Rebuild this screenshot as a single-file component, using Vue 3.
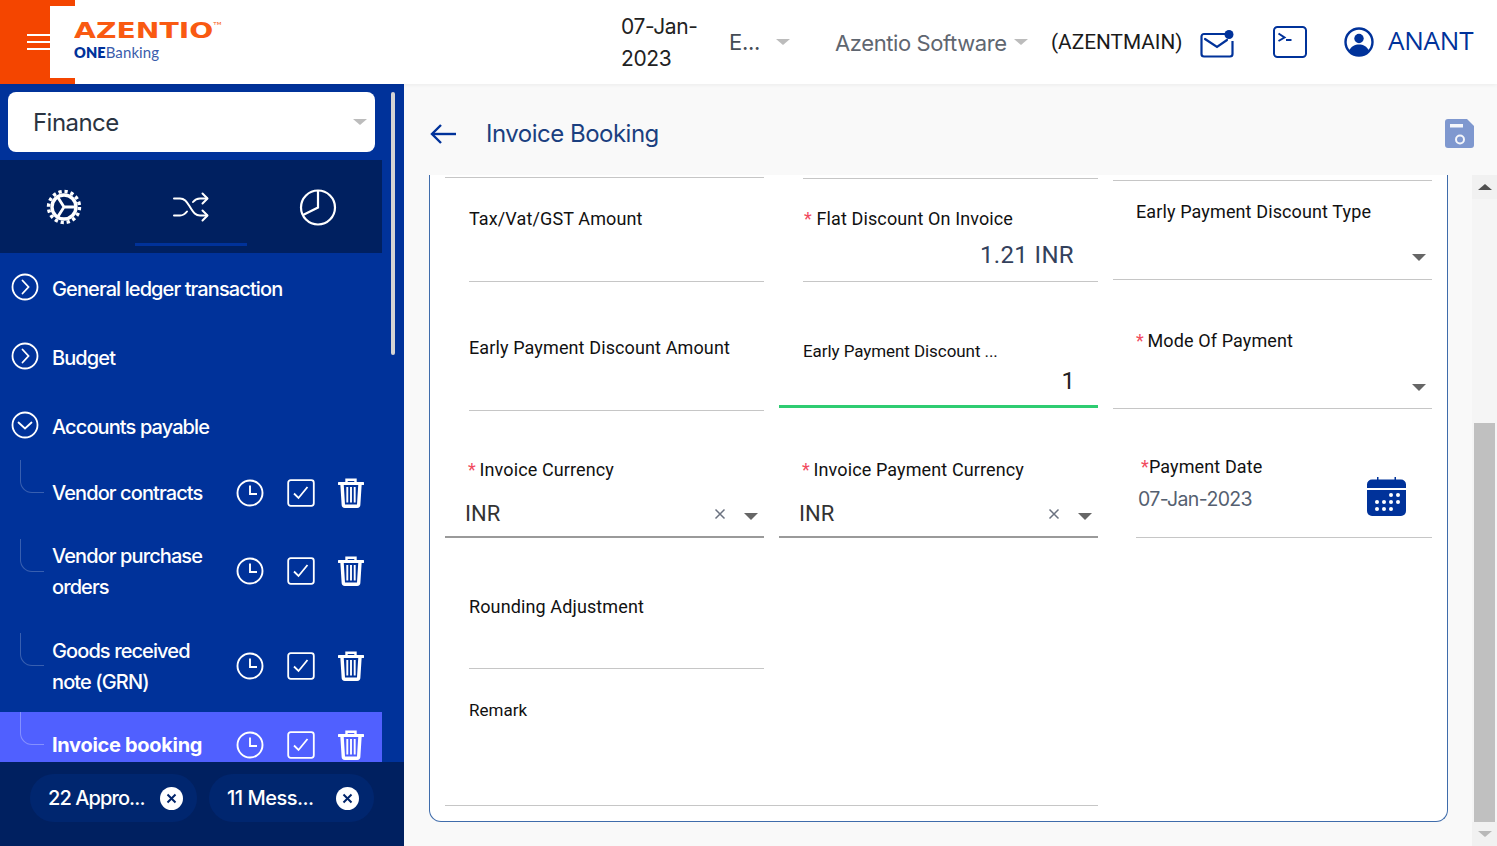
<script setup>
const topMenus = [
  { label: "General ledger transaction", open: false },
  { label: "Budget", open: false },
  { label: "Accounts payable", open: true },
];

const subMenus = [
  { label: "Vendor contracts", kind: "short" },
  { label: "Vendor purchase orders", kind: "tall" },
  { label: "Goods received note (GRN)", kind: "short" },
  { label: "Invoice booking", kind: "short", active: true },
];

const chips = [
  { label: "22 Appro...", kind: "first" },
  { label: "11 Mess...", kind: "second" },
];
</script>

<template>
  <div class="app-shell">
    <header class="topbar">
      <div class="brand">
        <div class="burger"><span></span><span></span><span></span></div>
        <div class="logo-box">
          <div class="logo-main">AZENTIO<sup>TM</sup></div>
          <div class="logo-sub"><b>ONE</b>Banking</div>
        </div>
      </div>
      <div class="top-items">
        <div class="top-date">07-Jan-<br />2023</div>
        <div class="top-lang">E...</div>
        <i class="caret-light lang-caret"></i>
        <div class="top-company">Azentio Software</div>
        <i class="caret-light company-caret"></i>
        <div class="top-code">(AZENTMAIN)</div>
        <svg class="mail-icon" width="34" height="28" viewBox="0 0 34 28" fill="none" stroke="#00329a" stroke-width="2.2">
          <path d="M25 4H4a2.500 2.500 0 0 0-2.500 2.500V24A2.500 2.500 0 0 0 4 26.500h26a2.500 2.500 0 0 0 2.500-2.500V11" />
          <path d="M5 9l12 8 10-7" stroke-linecap="round" />
          <circle cx="29" cy="4.500" r="4.500" fill="#00329a" stroke="none" />
        </svg>
        <svg class="term-icon" width="34" height="32" viewBox="0 0 34 32" fill="none" stroke="#00329a" stroke-width="2">
          <rect x="1" y="1" width="32" height="30" rx="3.500" />
          <path d="M5.500 7.500l6 4-6 3.500" />
          <path d="M13 14h5.500" />
        </svg>
        <svg class="user-icon" width="30" height="30" viewBox="0 0 30 30">
          <circle cx="15" cy="15" r="13.500" fill="none" stroke="#00329a" stroke-width="2.400" />
          <circle cx="15" cy="11.500" r="4.700" fill="#00329a" />
          <path d="M5 24c2-5 6-6.500 10-6.500S23 19 25 24c-2.500 3-6 4.500-10 4.500S7.500 27 5 24z" fill="#00329a" />
        </svg>
        <div class="top-user">ANANT</div>
      </div>
    </header>

    <div class="workspace">
      <aside class="sidebar">
        <div class="side-scroll">
          <div class="module-select">
            <span>Finance</span>
            <i class="caret-light"></i>
          </div>

          <div class="side-tabs">
            <svg class="tab-gear" width="36" height="36" viewBox="0 0 36 36" fill="none" stroke="#fff">
              <circle cx="18" cy="18" r="15.500" stroke-width="3.400" stroke-dasharray="3.250 2.840" />
              <circle cx="18" cy="18" r="12" stroke-width="3.400" />
              <path d="M18 18h11M18 18l-6-9.500M18 18l-6 9.500" stroke-width="2.800" />
            </svg>
            <div class="tab-active">
              <svg width="36" height="30" viewBox="0 0 36 30" fill="none" stroke="#fff" stroke-width="2" stroke-linecap="round" stroke-linejoin="round">
                <path d="M1 6.500h6c5 0 7 4 10 8.500s5 8.500 10 8.500h7" />
                <path d="M1 23.500h6c3 0 5-1.500 7-4M20 10c2-2.500 4-3.500 7-3.500h7" />
                <path d="M29.500 1.500l5 5-5 5M29.500 18.500l5 5-5 5" />
              </svg>
            </div>
            <svg class="tab-pie" width="38" height="38" viewBox="0 0 38 38" fill="none" stroke="#fff" stroke-width="2.200">
              <circle cx="19" cy="19.500" r="17" />
              <path d="M19 2.500v17L4 27" />
            </svg>
          </div>

          <nav class="side-menu">
            <div v-for="item in topMenus" :key="item.label" class="menu-row">
              <svg width="28" height="28" viewBox="0 0 28 28" fill="none" stroke="#fff" stroke-width="1.800">
                <circle cx="14" cy="14" r="12.500" />
                <path v-if="item.open" d="M7.500 11.500l6.500 6 6.500-6" stroke-linecap="round" />
                <path v-else d="M11.500 7.500l6 6.500-6 6.500" stroke-linecap="round" />
              </svg>
              <span>{{ item.label }}</span>
            </div>

            <div
              v-for="sub in subMenus"
              :key="sub.label"
              class="sub-row"
              :class="[sub.kind, { active: sub.active }]"
            >
              <i class="connector"></i>
              <div class="sub-inner">
                <span class="sub-label">{{ sub.label }}</span>
                <div class="sub-actions">
                  <svg width="28" height="28" viewBox="0 0 28 28" fill="none" stroke="#fff" stroke-width="1.900">
                    <circle cx="14" cy="14" r="12.500" />
                    <path d="M14 6.500V15h7" />
                  </svg>
                  <svg width="28" height="28" viewBox="0 0 28 28" fill="none" stroke="#fff" stroke-width="1.800">
                    <rect x="1.200" y="1.200" width="25.600" height="25.600" rx="2.500" />
                    <path d="M7 14.500l4.500 4.500L20.500 8" />
                  </svg>
                  <svg width="26" height="30" viewBox="0 0 26 30" fill="none" stroke="#fff" stroke-width="2.400">
                    <path d="M1 5.500h24" stroke-width="3" stroke-linecap="round" />
                    <path d="M8.500 5V1.800h9V5" />
                    <path d="M4 6l1.300 20.500A1.800 1.800 0 0 0 7 28.300h12a1.800 1.800 0 0 0 1.700-1.800L22 6" stroke-width="3.400" />
                    <path d="M9.300 9v15.500M13 9v15.500M16.700 9v15.500" stroke-width="1.900" />
                  </svg>
                </div>
              </div>
            </div>
          </nav>

          <div class="side-thumb"></div>
        </div>

        <footer class="side-footer">
          <div v-for="chip in chips" :key="chip.label" class="chip" :class="chip.kind">
            <span>{{ chip.label }}</span>
            <svg width="23" height="23" viewBox="0 0 23 23">
              <circle cx="11.500" cy="11.500" r="11.500" fill="#fff" />
              <path d="M7.500 7.500l8 8M15.500 7.500l-8 8" stroke="#00246b" stroke-width="2" fill="none" />
            </svg>
          </div>
        </footer>
      </aside>

      <main class="content">
        <div class="page-head">
          <svg class="back-icon" width="26" height="22" viewBox="0 0 26 22" fill="none" stroke="#00329a" stroke-width="2.400">
            <path d="M26 11H2" />
            <path d="M11 2l-9 9 9 9" />
          </svg>
          <h1>Invoice Booking</h1>
          <svg class="save-icon" width="29" height="29" viewBox="0 0 29 29">
            <path d="M3 0h19l7 7v19a3 3 0 0 1-3 3H3a3 3 0 0 1-3-3V3a3 3 0 0 1 3-3z" fill="#7f98cf" />
            <rect x="5" y="5" width="13" height="3.500" fill="#f4f6fb" />
            <circle cx="15" cy="20.500" r="4" fill="none" stroke="#f4f6fb" stroke-width="2" />
          </svg>
        </div>

        <div class="body-row">
          <section class="form-card">
            <div class="stub stub-a"></div>
            <div class="stub stub-b"></div>
            <div class="stub stub-c"></div>

            <div class="field indent pad-25">
              <label>Tax/Vat/GST Amount</label>
            </div>
            <div class="field indent pad-25">
              <label class="nudge"><em>*</em> Flat Discount On Invoice</label>
              <div class="value amount">1.21 INR</div>
            </div>
            <div class="field pad-18 lift">
              <label class="label-c">Early Payment Discount Type</label>
              <div class="control"><i class="caret-dark"></i></div>
            </div>

            <div class="field indent pad-53">
              <label>Early Payment Discount Amount</label>
            </div>
            <div class="field focus pad-56">
              <label class="label-focus">Early Payment Discount ...</label>
              <div class="value focus-value">1</div>
            </div>
            <div class="field pad-46 lift">
              <label class="label-c"><em>*</em> Mode Of Payment</label>
              <div class="control low"><i class="caret-dark"></i></div>
            </div>

            <div class="field strong pad-46">
              <label class="label-s"><em>*</em> Invoice Currency</label>
              <div class="select-value">
                <span>INR</span>
                <svg width="12" height="12" viewBox="0 0 12 12" stroke="#6b7280" stroke-width="1.500"><path d="M1.500 1.500l9 9M10.500 1.500l-9 9" /></svg>
                <i class="caret-dark"></i>
              </div>
            </div>
            <div class="field strong pad-46">
              <label class="label-s"><em>*</em> Invoice Payment Currency</label>
              <div class="select-value">
                <span>INR</span>
                <svg width="12" height="12" viewBox="0 0 12 12" stroke="#6b7280" stroke-width="1.500"><path d="M1.500 1.500l9 9M10.500 1.500l-9 9" /></svg>
                <i class="caret-dark"></i>
              </div>
            </div>
            <div class="field date-field pad-43">
              <div>
                <label class="label-date"><em>*</em>Payment Date</label>
                <div class="date-value">07-Jan-2023</div>
              </div>
              <svg class="cal-icon" width="39" height="39" viewBox="0 0 39 39">
                <path d="M5 2.500h5V0h1.500v2.500h16V0H29v2.500h5a5 5 0 0 1 5 5V11H0V7.500a5 5 0 0 1 5-5z" fill="#00329a" />
                <path d="M0 13h39v21a5 5 0 0 1-5 5H5a5 5 0 0 1-5-5z" fill="#00329a" />
                <g fill="#fff">
                  <circle cx="24" cy="18" r="2" /><circle cx="31" cy="18" r="2" />
                  <circle cx="10" cy="25" r="2" /><circle cx="17" cy="25" r="2" /><circle cx="24" cy="25" r="2" /><circle cx="31" cy="25" r="2" />
                  <circle cx="10" cy="32" r="2" /><circle cx="17" cy="32" r="2" /><circle cx="24" cy="32" r="2" />
                </g>
              </svg>
            </div>

            <div class="field indent pad-56">
              <label>Rounding Adjustment</label>
            </div>
            <div class="blank"></div>
            <div class="blank"></div>

            <div class="field wide pad-28">
              <label class="label-remark">Remark</label>
            </div>
            <div class="blank"></div>
          </section>

          <div class="page-scroll">
            <div class="arrow-box"><i class="arrow-up"></i></div>
            <div class="page-track"><div class="page-thumb"></div></div>
            <div class="arrow-box"><i class="arrow-down"></i></div>
          </div>
        </div>
      </main>
    </div>
  </div>
</template>

<style scoped>
.app-shell {
  width: 1497px;
  height: 846px;
  overflow: hidden;
  display: flex;
  flex-direction: column;
  font-family: Inter, "Liberation Sans", sans-serif;
  background: #f9f9f9;
}

/* header */
.topbar {
  height: 84px;
  flex: none;
  display: flex;
  background: #fff;
  position: relative;
  z-index: 2;
  box-shadow: 0 1px 4px rgba(0, 0, 0, 0.06);
}

.brand {
  width: 75px;
  height: 84px;
  background: #f44500;
  position: relative;
}

.burger {
  display: flex;
  flex-direction: column;
  gap: 5px;
  padding: 34px 0 0 27px;
}

.burger span {
  display: block;
  width: 23px;
  height: 2px;
  background: #fff;
}

.logo-box {
  position: absolute;
  left: 50px;
  top: 6px;
  width: 190px;
  height: 72px;
  background: #fff;
}

.logo-main {
  position: absolute;
  left: 24px;
  top: 12px;
  font-family: "DejaVu Sans", sans-serif;
  font-weight: 700;
  font-size: 20.500px;
  line-height: 26px;
  color: #f95a12;
  transform: scaleX(1.38);
  transform-origin: left center;
  white-space: nowrap;
}

.logo-main sup {
  font-size: 4px;
  font-weight: 400;
  vertical-align: 13px;
  line-height: 0;
}

.logo-sub {
  position: absolute;
  left: 24px;
  top: 36px;
  font-family: Lato, sans-serif;
  font-size: 15px;
  line-height: 20px;
  color: #3a5cab;
  letter-spacing: 0.1px;
}

.logo-sub b {
  color: #00329a;
  font-weight: 800;
  font-size: 14.500px;
}

.top-items {
  flex: 1;
  display: flex;
  align-items: center;
  padding-left: 546px;
}

.top-date {
  width: 108px;
  margin-top: 2px;
  font-size: 21px;
  line-height: 32px;
  letter-spacing: -0.4px;
  color: #222;
}

.top-lang {
  width: 47px;
  font-size: 22px;
  letter-spacing: -0.3px;
  color: #444c55;
}

.caret-light {
  display: block;
  width: 0;
  height: 0;
  border-left: 7px solid transparent;
  border-right: 7px solid transparent;
  border-top: 6px solid #bcbcbc;
}

.lang-caret {
  margin-right: 45px;
}

.top-company {
  width: 179px;
  margin-top: 2px;
  font-size: 22px;
  letter-spacing: -0.4px;
  color: #5f6670;
  white-space: nowrap;
}

.company-caret {
  margin-right: 23px;
}

.top-code {
  width: 149px;
  font-family: Roboto, sans-serif;
  font-size: 20.800px;
  color: #1a1a1a;
  white-space: nowrap;
}

.mail-icon {
  margin-right: 39px;
  margin-top: 3px;
}

.term-icon {
  margin-right: 37px;
}

.user-icon {
  margin-right: 14px;
}

.top-user {
  margin-top: -4px;
  font-family: "Open Sans", sans-serif;
  font-size: 26px;
  letter-spacing: -0.2px;
  color: #00329a;
}

/* sidebar */
.workspace {
  flex: 1;
  display: flex;
  min-height: 0;
}

.sidebar {
  width: 404px;
  flex: none;
  display: flex;
  flex-direction: column;
  background: #00329a;
}

.side-scroll {
  flex: 1;
  min-height: 0;
  overflow: hidden;
  position: relative;
  padding-top: 8px;
}

.module-select {
  width: 367px;
  height: 60px;
  margin-left: 8px;
  box-sizing: border-box;
  padding: 0 8px 0 25px;
  display: flex;
  align-items: center;
  justify-content: space-between;
  background: #fff;
  border-radius: 8px;
  font-size: 24px;
  letter-spacing: -0.55px;
  color: #2a3442;
}

.side-tabs {
  width: 382px;
  height: 93px;
  margin-top: 8px;
  display: grid;
  grid-template-columns: 135px 112px 135px;
  background: #002060;
}

.tab-gear {
  margin: 29px 0 0 46px;
}

.tab-pie {
  margin: 28px 0 0 52px;
}

.tab-active {
  width: 112px;
  height: 86px;
  box-sizing: border-box;
  padding-top: 32px;
  display: flex;
  justify-content: center;
  border-bottom: 3px solid #00329a;
}

.side-menu {
  width: 382px;
  padding-top: 1px;
}

.menu-row {
  height: 69px;
  padding-left: 11px;
  display: flex;
  align-items: center;
  gap: 13px;
  color: #fff;
  font-size: 20px;
  font-weight: 500;
  letter-spacing: -0.9px;
}

.menu-row:nth-child(3) {
  height: 68px;
}

.menu-row:nth-child(3) span {
  margin-top: 2px;
}

.menu-row svg {
  margin-top: -3px;
}

.sub-row {
  position: relative;
  color: #fff;
  font-size: 20px;
  font-weight: 500;
  letter-spacing: -0.9px;
  line-height: 31.500px;
}

.sub-row.short {
  height: 79px;
}

.sub-row.tall {
  height: 94px;
}

.sub-row.active {
  background: #5060ff;
  font-weight: 700;
  letter-spacing: -0.3px;
}

.connector {
  position: absolute;
  left: 20px;
  top: 0;
  width: 24px;
  height: 33px;
  box-sizing: border-box;
  border-left: 1.500px solid rgba(255, 255, 255, 0.22);
  border-bottom: 1.500px solid rgba(255, 255, 255, 0.22);
  border-bottom-left-radius: 12px;
}

.sub-row.active .connector {
  border-color: rgba(255, 255, 255, 0.3);
}

.sub-inner {
  height: 66px;
  display: flex;
  align-items: center;
}

.tall .sub-inner {
  height: 64px;
}

.sub-label {
  width: 170px;
  margin: 2px 0 0 52px;
  flex: none;
}

.sub-actions {
  display: flex;
  align-items: center;
  gap: 23px;
  margin-left: 14px;
}

.side-thumb {
  position: absolute;
  left: 391px;
  top: 8px;
  width: 4px;
  height: 263px;
  border-radius: 2px;
  background: #d4d4d4;
}

.side-footer {
  height: 84px;
  flex: none;
  box-sizing: border-box;
  padding: 12px 0 0 30px;
  display: flex;
  gap: 12px;
  background: #002060;
}

.chip {
  height: 48px;
  box-sizing: border-box;
  display: flex;
  align-items: center;
  justify-content: space-between;
  border-radius: 24px;
  background: #00266f;
  color: #fff;
  font-size: 20px;
  font-weight: 500;
  letter-spacing: -0.9px;
}

.chip.first {
  width: 167px;
  padding: 0 14px 0 18px;
}

.chip.second {
  width: 165px;
  padding: 0 15px 0 18px;
  letter-spacing: -0.5px;
}

/* main */
.content {
  flex: 1;
  min-width: 0;
  display: flex;
  flex-direction: column;
}

.page-head {
  height: 91px;
  flex: none;
  box-sizing: border-box;
  padding: 8px 23px 0 26px;
  display: flex;
  align-items: center;
}

.back-icon {
  margin-right: 30px;
}

.page-head h1 {
  flex: 1;
  margin: 0;
  font-size: 24px;
  font-weight: 400;
  letter-spacing: -0.5px;
  color: #1b3f80;
}

.body-row {
  flex: 1;
  min-height: 0;
  display: flex;
  justify-content: space-between;
  padding-left: 25px;
}

.form-card {
  width: 1019px;
  height: 647px;
  box-sizing: border-box;
  padding: 0 15px;
  display: grid;
  grid-template-columns: 319px 319px 319px;
  grid-template-rows: 6px 101px 129px 127px 131px 137px;
  column-gap: 15px;
  background: #fff;
  border: 1px solid #3f6cab;
  border-top: none;
  border-radius: 0 0 12px 12px;
}

.stub {
  border-bottom: 1px solid #c6c6c6;
  align-self: start;
}

.stub-a {
  height: 2px;
}

.stub-b {
  height: 3px;
  margin-left: 24px;
}

.stub-c {
  height: 5px;
}

.field {
  box-sizing: border-box;
  display: flex;
  flex-direction: column;
  border-bottom: 1px solid #c6c6c6;
  color: #111;
  font-family: Roboto, sans-serif;
}

.field label {
  display: block;
  margin-top: 1px;
  font-size: 18px;
  line-height: 24px;
  letter-spacing: 0.12px;
  white-space: nowrap;
}

.field em {
  color: #f14b5f;
  font-style: normal;
}

.indent {
  margin-left: 24px;
}

.nudge {
  padding-left: 1px;
}

.lift {
  margin-bottom: 2px;
}

.pad-18 { padding-top: 18px; }
.pad-25 { padding-top: 25px; }
.pad-28 { padding-top: 28px; }
.pad-43 { padding-top: 43px; }
.pad-46 { padding-top: 46px; }
.pad-53 { padding-top: 53px; }
.pad-56 { padding-top: 56px; }

.value {
  font-size: 24px;
  line-height: 30px;
  text-align: right;
  color: #33415c;
}

.amount {
  margin-top: 9px;
  padding-right: 24px;
  letter-spacing: 0.35px;
}

.focus-value {
  margin-top: 3px;
  padding-right: 23px;
  color: #222;
}

.focus {
  padding-left: 24px;
  margin-bottom: 3px;
  border-bottom: 3px solid #2ecc71;
}

.field .label-focus {
  font-size: 17px;
  letter-spacing: -0.07px;
}

.label-c {
  padding-left: 23px;
}

.label-c em,
.label-s em {
  margin-right: -1px;
}

.control {
  margin-top: auto;
  height: 43px;
  padding-right: 6px;
  display: flex;
  justify-content: flex-end;
  align-items: center;
}

.control.low {
  height: 41px;
}

.caret-dark {
  display: block;
  width: 0;
  height: 0;
  border-left: 7px solid transparent;
  border-right: 7px solid transparent;
  border-top: 7px solid #666;
}

.strong {
  border-bottom: 2px solid #9a9a9a;
}

.label-s {
  padding-left: 23px;
}

.select-value {
  margin-top: 16px;
  height: 30px;
  padding-left: 20px;
  padding-right: 6px;
  display: flex;
  align-items: center;
  font-size: 22px;
  color: #333;
}

.select-value span {
  flex: 1;
}

.select-value svg {
  margin: 2px 18px 0 0;
}

.select-value .caret-dark {
  margin-top: 7px;
}

.date-field {
  margin-left: 23px;
  flex-direction: row;
  justify-content: space-between;
}

.field .label-date {
  padding-left: 5px;
}

.date-value {
  margin-top: 6px;
  padding-left: 2px;
  font-family: Inter, sans-serif;
  font-size: 19.500px;
  letter-spacing: -0.65px;
  line-height: 28px;
  color: #555f70;
}

.cal-icon {
  margin: 23px 26px 0 0;
}

.wide {
  grid-column: span 2;
}

.field .label-remark {
  padding-left: 24px;
  font-size: 17px;
  letter-spacing: 0;
}

.page-scroll {
  width: 25px;
  height: 671px;
  display: flex;
  flex-direction: column;
  background: #f5f5f5;
}

.arrow-box {
  flex: none;
  height: 24px;
  display: flex;
  align-items: center;
  justify-content: center;
  background: #f1f1f1;
}

.arrow-up,
.arrow-down {
  display: block;
  width: 0;
  height: 0;
  border-left: 7px solid transparent;
  border-right: 7px solid transparent;
}

.arrow-up {
  border-bottom: 6px solid #505050;
}

.arrow-down {
  border-top: 6px solid #b8b8b8;
}

.page-track {
  flex: 1;
  display: flex;
  flex-direction: column;
  justify-content: flex-end;
}

.page-thumb {
  width: 21px;
  height: 399px;
  margin-left: 2px;
  background: #c0c0c0;
}
</style>

<style>
html,
body {
  margin: 0;
  background: #f9f9f9;
}
</style>
